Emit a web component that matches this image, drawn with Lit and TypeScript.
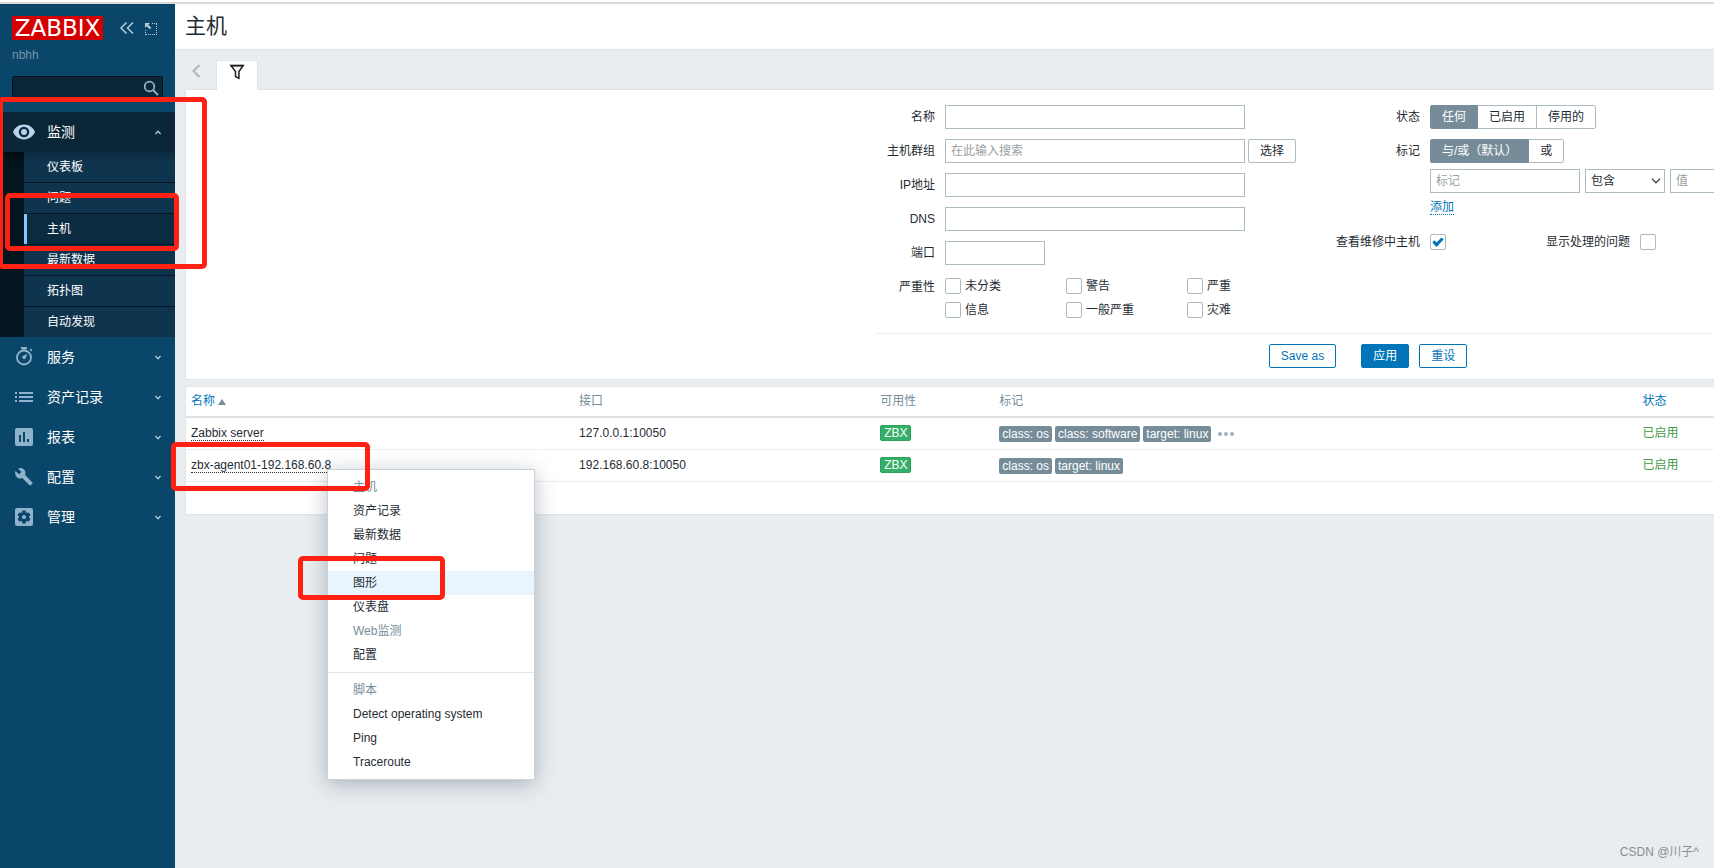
import { LitElement, html, css, svg, nothing, type TemplateResult } from "lit";
import { customElement, state } from "lit/decorators.js";
import { classMap } from "lit/directives/class-map.js";

const ICONS: Record<string, TemplateResult> = {
  eye: svg`<path fill-rule="evenodd" d="M12 4.6C6.6 4.6 2.6 8 1 12c1.600 4 5.600 7.400 11 7.400S21.400 16 23 12C21.400 8 17.400 4.600 12 4.600zm0 12.600a5.200 5.200 0 1 1 0-10.400 5.200 5.200 0 0 1 0 10.400zm0-2.200a3 3 0 1 0 0-6 3 3 0 0 0 0 6z"/>`,
  watch: svg`<path d="M9 2h6v2.200H9z"/><path d="M11 3h2v3h-2z"/><circle cx="12" cy="12.500" r="7" fill="none" stroke="currentColor" stroke-width="1.800"/><path d="M15.500 9l-1.900 4.200a1.800 1.800 0 1 1-2.500-2.500z"/><path d="M17.600 4.600l1.300-1.100 1.500 1.600-1.200 1.300z"/>`,
  list: svg`<path d="M3 7h2v2H3zM3 11h2v2H3zM3 15h2v2H3zM7 7h14v2H7zM7 11h14v2H7zM7 15h14v2H7z"/>`,
  chart: svg`<path fill-rule="evenodd" d="M5 3h14a2 2 0 0 1 2 2v14a2 2 0 0 1-2 2H5a2 2 0 0 1-2-2V5c0-1.100.900-2 2-2zm2 7v7h2v-7zm4-3v10h2V7zm4 7v3h2v-3z"/>`,
  wrench: svg`<path transform="translate(1.800 1) scale(.9)" d="M20.700 18.200l-8.100-8.100c.800-2.100.400-4.500-1.300-6.200C9.500 2.100 6.800 1.700 4.700 2.800l3.800 3.800-2.700 2.600L2 5.500C.900 7.700 1.400 10.300 3.200 12.100c1.700 1.700 4.100 2.100 6.200 1.300l8.100 8.100c.400.400.900.400 1.300 0l1.900-2c.400-.300.400-.900 0-1.300z"/>`,
  gear: svg`<path fill-rule="evenodd" d="M5 3h14a2 2 0 0 1 2 2v14a2 2 0 0 1-2 2H5a2 2 0 0 1-2-2V5c0-1.100.900-2 2-2zm5.400 2.500l-.400 2-1 .600-1.900-.700-1.600 2.800 1.500 1.200v1.200l-1.500 1.200 1.600 2.800 1.900-.700 1 .600.400 2h3.200l.400-2 1-.600 1.900.700 1.600-2.800-1.500-1.200v-1.200l1.500-1.200-1.600-2.800-1.900.700-1-.600-.400-2zM12 9.900a2.100 2.100 0 1 1 0 4.200 2.100 2.100 0 0 1 0-4.200z"/>`,
};

interface Section {
  icon: string;
  label: string;
  children?: string[];
}

const SECTIONS: Section[] = [
  { icon: "eye", label: "监测", children: ["仪表板", "问题", "主机", "最新数据", "拓扑图", "自动发现"] },
  { icon: "watch", label: "服务" },
  { icon: "list", label: "资产记录" },
  { icon: "chart", label: "报表" },
  { icon: "wrench", label: "配置" },
  { icon: "gear", label: "管理" },
];

const HOSTS = [
  { name: "Zabbix server", address: "127.0.0.1:10050", tags: ["class: os", "class: software", "target: linux"], more: true },
  { name: "zbx-agent01-192.168.60.8", address: "192.168.60.8:10050", tags: ["class: os", "target: linux"], more: false },
];

const FONT = css`"Liberation Sans", Arial, "Noto Sans CJK SC", sans-serif`;

@customElement("zbx-sidebar")
class ZbxSidebar extends LitElement {
  static styles = css`
    :host { display: block; background: #0a466a; color: #fff; font: 14px/20px ${FONT}; }
    a { color: inherit; text-decoration: none; }
    .brand { display: flex; align-items: center; padding: 12px 12px 0; }
    .logo { background: #d40000; font: 23px/24px "DejaVu Sans", sans-serif; width: 91px; text-align: center; }
    .tool { border: 0; padding: 0; background: none; color: #b5cddb; display: flex; width: 14px; }
    .collapse { margin: 0 10px 0 17px; }
    .server { padding: 6px 12px 0; font-size: 12px; line-height: 18px; color: #7994a8; }
    .search { display: flex; align-items: center; margin: 12px 12px 11px; height: 25px; background: #0a2637; border: 1px solid #03131d; border-radius: 2px; box-sizing: border-box; padding: 0 3px 2px 0; }
    .search input { flex: 1; min-width: 0; border: 0; background: none; color: #fff; outline: 0; }
    .search svg { color: #8fb0c8; flex: none; }
    ul { list-style: none; margin: 0; padding: 0; }
    .top { display: flex; align-items: center; height: 40px; padding: 0 14px 0 12px; }
    .top .ico { color: #8fb3cc; fill: currentColor; margin-right: 11px; }
    .top .txt { flex: 1; }
    .top.open { background: #0a2637; }
    .top.open .ico { color: #b5d4ec; }
    .sub { background: linear-gradient(#020b12, #04151f 12px); padding-left: 24px; }
    .sub a { display: block; height: 30px; line-height: 30px; padding-left: 23px; font-size: 12px; background: #0f344e; }
    .sub li + li { border-top: 1px solid #031522; }
    .sub li:first-child a { background: linear-gradient(#0b2a40, #0f344e 10px); }
    .sub .current { background: #0b2b40; border-left: 3px solid #80c8ff; padding-left: 20px; }
  `;
  render() {
    return html`
      <div class="brand">
        <div class="logo">ZABBIX</div>
        <button class="tool collapse" aria-label="收起">
          <svg width="14" height="14" viewBox="0 0 14 14" fill="none" stroke="currentColor" stroke-width="1.500"><path d="M6.500 1.500L1 7l5.500 5.500M13 1.500L7.500 7l5.500 5.500" /></svg>
        </button>
        <button class="tool" aria-label="隐藏">
          <svg width="13" height="13" viewBox="0 0 13 13" fill="currentColor"><path d="M1 1h5L4.300 2.700 7.300 5.700 5.700 7.300 2.700 4.300 1 6z" /><path d="M8 1.500h5M12.500 2v11M1.500 8v5M2 12.500h11" fill="none" stroke="currentColor" stroke-dasharray="1 1" /></svg>
        </button>
      </div>
      <div class="server">nbhh</div>
      <label class="search"
        ><input type="text" aria-label="搜索" /><svg width="16" height="16" viewBox="0 0 16 16" fill="none" stroke="currentColor" stroke-width="1.800"><circle cx="6.500" cy="6.500" r="4.800" /><path d="M10 10l5 5" /></svg
      ></label>
      <nav>
        <ul>
          ${SECTIONS.map(
            (s) => html`<li>
              <a href="#" class=${classMap({ top: true, open: !!s.children })}>
                <svg class="ico" width="24" height="24" viewBox="0 0 24 24">${ICONS[s.icon]}</svg>
                <span class="txt">${s.label}</span>
                <svg width="6" height="5" viewBox="0 0 6 5" fill="none" stroke="#b5cddb" stroke-width="1.300"><path d=${s.children ? "M.4 4L3 1.300 5.600 4" : "M.4 1L3 3.700 5.600 1"} /></svg>
              </a>
              ${s.children
                ? html`<ul class="sub">
                    ${s.children.map((c) => html`<li><a href="#" class=${c === "主机" ? "current" : ""}>${c}</a></li>`)}
                  </ul>`
                : nothing}
            </li>`,
          )}
        </ul>
      </nav>
    `;
  }
}

@customElement("zbx-filter")
class ZbxFilter extends LitElement {
  @state() private status = "任何";
  @state() private operator = "与/或（默认）";

  static styles = css`
    :host { display: block; color: #1f2c33; font: 12px/24px ${FONT}; }
    input, select, button { font: inherit; color: inherit; box-sizing: border-box; margin: 0; border-radius: 0; }
    .tabs { display: flex; height: 29px; }
    .prev { width: 31px; border: 0; padding: 0 0 8px 7px; background: none; display: flex; align-items: center; }
    .tab { width: 42px; height: 30px; border: 1px solid #dfe4e7; border-bottom: 0; background: #fff; display: flex; justify-content: center; padding: 3px 0 0; z-index: 1; }
    .panel { display: flex; justify-content: flex-end; background: #fff; border: 1px solid #dfe4e7; border-right: 0; overflow: hidden; padding-top: 15px; }
    form { flex: 0 0 984px; margin-right: -146px; }
    .columns { display: flex; gap: 40px; padding-bottom: 15px; }
    .fields { display: grid; column-gap: 10px; row-gap: 10px; align-content: start; }
    .left { grid-template-columns: 59px 361px; margin-right: -10px; }
    .right { grid-template-columns: 84px 390px; }
    .name { text-align: right; white-space: nowrap; }
    .box { width: 300px; height: 24px; border: 1px solid #acbbc2; background: #fff; padding: 0 5px; outline: 0; line-height: 20px; }
    .box::placeholder { color: #9a9fa3; }
    .port { width: 100px; }
    .tagbox { width: 150px; }
    select { width: 80px; height: 24px; border: 1px solid #acbbc2; background: none; padding: 0 18px 0 5px; appearance: none; line-height: 22px; }
    .pick { display: grid; align-items: center; }
    .pick > * { grid-area: 1 / 1; }
    .pick svg { justify-self: end; margin-right: 4px; pointer-events: none; }
    .row { display: flex; gap: 3px; }
    .tagrow { display: flex; gap: 5px; margin-top: 6px; }
    .btn { height: 24px; line-height: 22px; padding: 0 11px; border: 1px solid #acbbc2; border-radius: 2px; background: #fff; white-space: nowrap; }
    .blue { border-color: #0275b8; color: #0275b8; }
    .solid { background: #0275b8; color: #fff; }
    .segs { display: flex; }
    .seg { height: 24px; line-height: 22px; box-sizing: border-box; padding: 0 11px; border: 1px solid #acbbc2; white-space: nowrap; }
    .seg + .seg { margin-left: -1px; }
    .seg:first-child { border-radius: 2px 0 0 2px; }
    .seg:last-child { border-radius: 0 2px 2px 0; }
    .seg.on { background: #768d99; border-color: #768d99; color: #fff; z-index: 1; }
    .seg input { appearance: none; width: 0; height: 0; display: block; }
    .add { display: block; width: max-content; line-height: 14px; color: #0275b8; text-decoration: none; border-bottom: 1px dotted #0275b8; margin: 7px 0 5px; }
    .checks { display: grid; grid-template-columns: repeat(3, 121px); row-gap: 8px; padding-top: 3px; }
    .checks label { display: flex; gap: 4px; height: 16px; line-height: 16px; align-items: center; }
    .tick { appearance: none; width: 16px; height: 16px; border: 1px solid #acbbc2; border-radius: 2px; background: #fff; display: grid; place-items: center; flex: none; }
    .tick:checked::after { content: ""; width: 10px; height: 6px; border: solid #0275b8; border-width: 0 0 3px 3px; box-sizing: border-box; transform: rotate(-45deg); margin-bottom: 3px; }
    .inline { display: flex; align-items: center; height: 24px; }
    .inline label { margin: 0 10px 0 100px; }
    .actions { display: flex; justify-content: center; gap: 10px; border-top: 1px solid #ebeef0; padding: 10px 0 11px; }
    .actions .save { margin-right: 15px; }
  `;

  private segments(name: string, options: string[], value: string, pick: (v: string) => void) {
    return html`<div class="segs" role="radiogroup" aria-label=${name}>
      ${options.map(
        (o) => html`<label class=${classMap({ seg: true, on: o === value })}
          ><input type="radio" name=${name} .checked=${o === value} @change=${() => pick(o)} />${o}</label
        >`,
      )}
    </div>`;
  }

  render() {
    return html`
      <div class="tabs">
        <button class="prev" aria-label="上一个"><svg width="9" height="14" viewBox="0 0 9 14" fill="none" stroke="#acbbc2" stroke-width="2.200"><path d="M7.500 1L1.500 7l6 6" /></svg></button>
        <button class="tab" aria-label="过滤器"><svg width="16" height="16" viewBox="0 0 16 16" fill="none" stroke="#1b1f22" stroke-width="1.500"><path d="M2 1.500h12.200L9.900 7.500v6.800L6.500 12.500v-5z" /><path d="M1.500 1.700h13" stroke-width="1.600" /></svg></button>
      </div>
      <div class="panel">
        <form @submit=${(e: Event) => e.preventDefault()}>
          <div class="columns">
            <div class="fields left">
              <label class="name" for="n">名称</label><input class="box" id="n" type="text" />
              <label class="name" for="g">主机群组</label>
              <div class="row"><input class="box" id="g" type="text" placeholder="在此输入搜索" /><button class="btn" type="button">选择</button></div>
              <label class="name" for="ip">IP地址</label><input class="box" id="ip" type="text" />
              <label class="name" for="dns">DNS</label><input class="box" id="dns" type="text" />
              <label class="name" for="port">端口</label><input class="box port" id="port" type="text" />
              <span class="name" id="sev">严重性</span>
              <div class="checks" role="group" aria-labelledby="sev">
                ${["未分类", "警告", "严重", "信息", "一般严重", "灾难"].map((s) => html`<label><input class="tick" type="checkbox" />${s}</label>`)}
              </div>
            </div>
            <div class="fields right">
              <span class="name">状态</span>
              ${this.segments("状态", ["任何", "已启用", "停用的"], this.status, (v) => (this.status = v))}
              <span class="name">标记</span>
              <div>
                ${this.segments("标记", ["与/或（默认）", "或"], this.operator, (v) => (this.operator = v))}
                <div class="tagrow">
                  <input class="box tagbox" type="text" placeholder="标记" aria-label="标记" />
                  <div class="pick">
                    <select aria-label="运算符"><option>包含</option></select>
                    <svg width="10" height="6" viewBox="0 0 10 6" fill="none" stroke="#3c4a52" stroke-width="1.400"><path d="M1 .7l4 4 4-4" /></svg>
                  </div>
                  <input class="box tagbox" type="text" placeholder="值" aria-label="值" />
                </div>
                <a class="add" href="#">添加</a>
              </div>
              <label class="name" for="m">查看维修中主机</label>
              <div class="inline">
                <input class="tick" id="m" type="checkbox" checked /><label for="s">显示处理的问题</label><input class="tick" id="s" type="checkbox" />
              </div>
            </div>
          </div>
          <div class="actions">
            <button class="btn blue save" type="button">Save as</button>
            <button class="btn blue solid">应用</button>
            <button class="btn blue" type="reset">重设</button>
          </div>
        </form>
      </div>
    `;
  }
}

@customElement("zbx-hosts")
class ZbxHosts extends LitElement {
  static styles = css`
    :host { display: block; color: #1f2c33; font: 12px/18px ${FONT}; background: #fff; border: 1px solid #dfe4e7; border-right: 0; }
    table { width: 100%; border-collapse: separate; border-spacing: 0; table-layout: fixed; }
    th, td { padding: 0 5px 2px; text-align: left; font-weight: normal; white-space: nowrap; box-sizing: border-box; }
    th { height: 31px; border-bottom: 2px solid #dce2e5; color: #768d99; }
    td { height: 32px; border-bottom: 1px solid #ebeef0; }
    .c-name { width: 25.4%; }
    .c-if { width: 19.7%; }
    .c-av { width: 7.8%; }
    .c-tags { width: 42.1%; }
    .sort { color: #0275b8; text-decoration: none; display: inline-flex; align-items: center; gap: 3px; }
    .arrow { border: 4px solid transparent; border-top: 0; border-bottom: 6px solid #768d99; margin-top: 3px; }
    .host { display: inline-block; line-height: 14px; color: inherit; text-decoration: none; border-bottom: 1px dotted #1f2c33; }
    .tags { display: flex; gap: 3px; align-items: center; padding-top: 3px; }
    .tag, .zbx { display: inline-block; border-radius: 2px; height: 16px; line-height: 16px; color: #fff; }
    .tag { background: #768d99; padding: 0 3px; }
    .zbx { background: #34af67; border: 1px solid #2f9f5e; padding: 0 3px; line-height: 14px; height: 14px; vertical-align: middle; }
    .more { display: flex; gap: 2px; border: 0; background: none; padding: 0 0 0 4px; }
    .more i { width: 4px; height: 4px; border-radius: 50%; background: #9fb0b9; }
    .on { color: #429e47; text-decoration: none; }
    .foot { height: 32px; }
  `;
  render() {
    return html`
      <table>
        <thead>
          <tr>
            <th class="c-name"><a class="sort" href="#">名称<span class="arrow"></span></a></th>
            <th class="c-if">接口</th>
            <th class="c-av">可用性</th>
            <th class="c-tags">标记</th>
            <th><a class="sort" href="#">状态</a></th>
          </tr>
        </thead>
        <tbody>
          ${HOSTS.map(
            (h) => html`<tr>
              <td><a class="host" href="#">${h.name}</a></td>
              <td>${h.address}</td>
              <td><span class="zbx">ZBX</span></td>
              <td>
                <div class="tags">
                  ${h.tags.map((t) => html`<span class="tag">${t}</span>`)}
                  ${h.more ? html`<button class="more" aria-label="更多"><i></i><i></i><i></i></button>` : nothing}
                </div>
              </td>
              <td><a class="on" href="#">已启用</a></td>
            </tr>`,
          )}
        </tbody>
      </table>
      <div class="foot"></div>
    `;
  }
}

@customElement("zbx-menu")
class ZbxMenu extends LitElement {
  static styles = css`
    :host { display: block; box-sizing: border-box; width: 208px; padding: 5px 0; background: #fff; border: 1px solid #c8d2d8; box-shadow: 0 4px 20px rgba(0, 30, 50, 0.28); font: 12px/24px ${FONT}; color: #1f2c33; }
    a, div { display: block; padding-left: 25px; height: 24px; color: inherit; text-decoration: none; }
    .dim { color: #768d99; }
    .hot { background: #e8f5ff; }
    hr { border: 0; height: 1px; background: #e3e8eb; margin: 5px 0; }
  `;
  render() {
    return html`
      <div class="dim">主机</div>
      <a href="#">资产记录</a>
      <a href="#">最新数据</a>
      <a href="#">问题</a>
      <a href="#" class="hot">图形</a>
      <a href="#">仪表盘</a>
      <a class="dim">Web监测</a>
      <a href="#">配置</a>
      <hr />
      <div class="dim">脚本</div>
      <a href="#">Detect operating system</a>
      <a href="#">Ping</a>
      <a href="#">Traceroute</a>
    `;
  }
}

@customElement("app-root")
class AppRoot extends LitElement {
  static styles = css`
    :host { display: flex; flex-direction: column; min-height: 100vh; position: relative; overflow: hidden; background: #e9edf0; font: 12px/18px ${FONT}; box-sizing: border-box; }
    .edge { height: 2px; background: #fff; border-bottom: 2px solid #dadada; }
    .shell { flex: 1; display: grid; grid-template-columns: 175px minmax(0, 1fr); }
    header { background: #fff; border-bottom: 1px solid #dfe4e7; height: 45px; padding-left: 10px; }
    h1 { margin: 0; font-size: 21px; line-height: 44px; font-weight: normal; color: #1f2c33; }
    .content { padding: 10px 0 0 10px; display: grid; row-gap: 6px; }
    .menu { position: absolute; left: 327px; top: 469px; }
    .mark { position: absolute; box-sizing: border-box; border: 5px solid #ff2213; border-radius: 5px; pointer-events: none; }
    .m1 { left: -2px; top: 97px; width: 209px; height: 172px; }
    .m2 { left: 5px; top: 193px; width: 174px; height: 58px; }
    .m3 { left: 171px; top: 442px; width: 199px; height: 49px; }
    .m4 { left: 298px; top: 556px; width: 147px; height: 44px; }
    .credit { position: absolute; right: 15px; bottom: 7px; color: #8b8f92; }
  `;
  render() {
    return html`
      <div class="edge"></div>
      <div class="shell">
        <zbx-sidebar></zbx-sidebar>
        <main>
          <header><h1>主机</h1></header>
          <div class="content">
            <zbx-filter></zbx-filter>
            <zbx-hosts></zbx-hosts>
          </div>
        </main>
      </div>
      <zbx-menu class="menu"></zbx-menu>
      <div class="mark m1"></div>
      <div class="mark m2"></div>
      <div class="mark m3"></div>
      <div class="mark m4"></div>
      <div class="credit">CSDN @川子^</div>
    `;
  }
}
